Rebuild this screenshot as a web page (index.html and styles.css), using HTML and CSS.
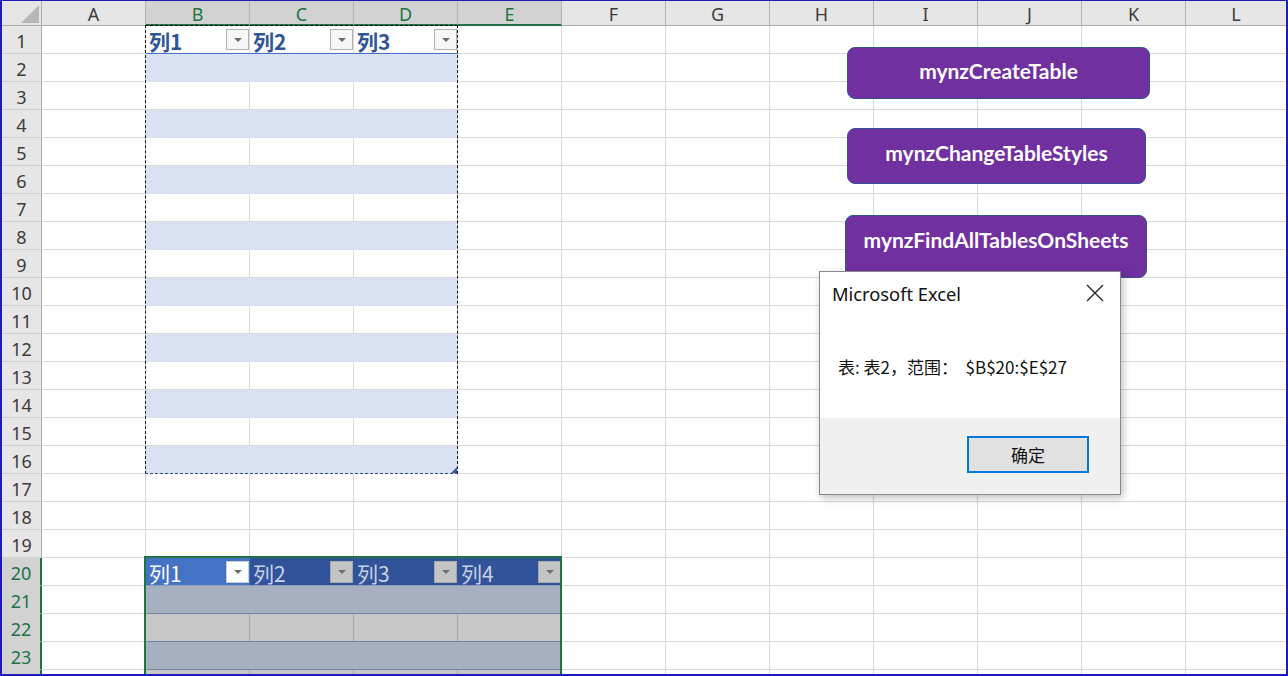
FILE: index.html
```html
<!DOCTYPE html>
<html lang="zh-CN">
<head>
<meta charset="utf-8">
<title>Excel</title>
<link rel="stylesheet" href="styles.css">
</head>
<body>
<div class="sheet">
  <div class="corner"><svg width="40" height="25" viewBox="0 0 40 25"><polygon points="37,4 37,22 19,22" fill="#b7b7b7"/></svg></div>
  <div class="colhdr">A</div>
  <div class="colhdr sel">B</div>
  <div class="colhdr sel">C</div>
  <div class="colhdr sel">D</div>
  <div class="colhdr sel">E</div>
  <div class="colhdr">F</div>
  <div class="colhdr">G</div>
  <div class="colhdr">H</div>
  <div class="colhdr">I</div>
  <div class="colhdr">J</div>
  <div class="colhdr">K</div>
  <div class="colhdr last">L</div>

  <div class="rowhdr r1">1</div>
  <div class="rowhdr">2</div>
  <div class="rowhdr">3</div>
  <div class="rowhdr">4</div>
  <div class="rowhdr">5</div>
  <div class="rowhdr">6</div>
  <div class="rowhdr">7</div>
  <div class="rowhdr">8</div>
  <div class="rowhdr">9</div>
  <div class="rowhdr">10</div>
  <div class="rowhdr">11</div>
  <div class="rowhdr">12</div>
  <div class="rowhdr">13</div>
  <div class="rowhdr">14</div>
  <div class="rowhdr">15</div>
  <div class="rowhdr">16</div>
  <div class="rowhdr">17</div>
  <div class="rowhdr">18</div>
  <div class="rowhdr">19</div>
  <div class="rowhdr sel">20</div>
  <div class="rowhdr sel">21</div>
  <div class="rowhdr sel">22</div>
  <div class="rowhdr sel">23</div>
  <div class="rowhdr sel"></div>

  <div class="cells"></div>

  <div class="table1">
    <div class="t1-head">
      <div class="t1-hcell">列1<span class="dd"></span></div>
      <div class="t1-hcell">列2<span class="dd"></span></div>
      <div class="t1-hcell">列3<span class="dd"></span></div>
    </div>
    <div class="t1-row band"></div>
    <div class="t1-row"></div>
    <div class="t1-row band"></div>
    <div class="t1-row"></div>
    <div class="t1-row band"></div>
    <div class="t1-row"></div>
    <div class="t1-row band"></div>
    <div class="t1-row"></div>
    <div class="t1-row band"></div>
    <div class="t1-row"></div>
    <div class="t1-row band"></div>
    <div class="t1-row"></div>
    <div class="t1-row band"></div>
    <div class="t1-row"></div>
    <div class="t1-row band"></div>
    <div class="ants"></div>
    <div class="handle"></div>
  </div>

  <div class="table2">
    <div class="t2-head">
      <div class="t2-hcell active">列1<span class="dd dd-white"></span></div>
      <div class="t2-hcell">列2<span class="dd dd-gray"></span></div>
      <div class="t2-hcell">列3<span class="dd dd-gray"></span></div>
      <div class="t2-hcell">列4<span class="dd dd-gray"></span></div>
    </div>
    <div class="t2-row dark"><div class="t2-cell"></div><div class="t2-cell"></div><div class="t2-cell"></div><div class="t2-cell"></div></div>
    <div class="t2-row gray"><div class="t2-cell"></div><div class="t2-cell"></div><div class="t2-cell"></div><div class="t2-cell"></div></div>
    <div class="t2-row dark"><div class="t2-cell"></div><div class="t2-cell"></div><div class="t2-cell"></div><div class="t2-cell"></div></div>
    <div class="t2-row gray"><div class="t2-cell"></div><div class="t2-cell"></div><div class="t2-cell"></div><div class="t2-cell"></div></div>
    <div class="selbox"></div>
  </div>

  <div class="macro btn1">mynzCreateTable</div>
  <div class="macro btn2">mynzChangeTableStyles</div>
  <div class="macro btn3">mynzFindAllTablesOnSheets</div>

  <div class="dialog">
    <div class="dlg-title">
      <span>Microsoft Excel</span>
      <svg class="dlg-close" width="18" height="18" viewBox="0 0 18 18"><path d="M1 1 L17 17 M17 1 L1 17" stroke="#222" stroke-width="1.3" fill="none"/></svg>
    </div>
    <div class="dlg-body">表: 表2，范围：&nbsp; $B$20:$E$27</div>
    <div class="dlg-foot">
      <div class="dlg-ok">确定</div>
    </div>
  </div>
</div>
</body>
</html>
```

FILE: styles.css
```css
html, body {
  margin: 0;
  padding: 0;
  background: #ffffff;
}

.sheet {
  position: relative;
  width: 1288px;
  height: 676px;
  box-sizing: border-box;
  border-style: solid;
  border-color: #1c1cb8;
  border-width: 1px 2px 2px 2px;
  overflow: hidden;
  display: grid;
  grid-template-columns: 40px repeat(11, 104px) 100px;
  grid-template-rows: 25px repeat(24, 28px);
  font-family: "Noto Sans", "Liberation Sans", sans-serif;
  background: #ffffff;
}

.corner {
  grid-column: 1;
  grid-row: 1;
  background: #e6e6e6;
  box-sizing: border-box;
  border-right: 1px solid #ababab;
  border-bottom: 1px solid #ababab;
}
.corner svg { display: block; }

.colhdr {
  grid-row: 1;
  background: #e6e6e6;
  box-sizing: border-box;
  border-right: 1px solid #b4b4b4;
  border-bottom: 1px solid #ababab;
  display: flex;
  align-items: center;
  justify-content: center;
  font-size: 18px;
  color: #3c3c3c;
  line-height: 1;
  padding-top: 1px;
}
.colhdr.last { border-right: none; }
.colhdr.sel {
  background: #d2d2d2;
  color: #217346;
  border-bottom: 2px solid #217346;
  padding-top: 2px;
}

.rowhdr {
  grid-column: 1;
  background: #e6e6e6;
  box-sizing: border-box;
  border-right: 1px solid #ababab;
  border-bottom: 1px solid #d0d0d0;
  display: flex;
  align-items: center;
  justify-content: center;
  font-size: 18px;
  color: #3c3c3c;
  line-height: 1;
  padding-top: 2px;
}
.rowhdr.r1 { grid-row: 2; }
.rowhdr.sel {
  background: #d2d2d2;
  color: #217346;
  border-right: 2px solid #217346;
}

.cells {
  grid-column: 2 / -1;
  grid-row: 2 / -1;
  background-image:
    repeating-linear-gradient(to right, transparent 0 103px, #d9d9d9 103px 104px),
    repeating-linear-gradient(to bottom, transparent 0 27px, #d9d9d9 27px 28px);
}

/* Table 1 */
.table1 {
  grid-column: 3 / 6;
  grid-row: 2 / 18;
  position: relative;
  display: flex;
  flex-direction: column;
}
.t1-head {
  display: flex;
  height: 28px;
}
.t1-hcell {
  position: relative;
  width: 104px;
  height: 28px;
  box-sizing: border-box;
  border-bottom: 1px solid #4472c4;
  font-family: "Noto Sans CJK SC", "Noto Sans", sans-serif;
  font-size: 21px;
  font-weight: 700;
  color: #2f5597;
  padding-left: 3px;
  line-height: 31px;
}
.t1-row {
  height: 28px;
  flex: none;
}
.t1-row.band { background: #d9e1f2; }

.dd {
  position: absolute;
  right: 1px;
  bottom: 3px;
  width: 23px;
  height: 21px;
  box-sizing: border-box;
  border: 1px solid #b1b1b1;
  background: #f7f7f7;
}
.dd::after {
  content: "";
  position: absolute;
  left: 7px;
  top: 8px;
  border-left: 4px solid transparent;
  border-right: 4px solid transparent;
  border-top: 4px solid #6d6d6d;
}
.dd-white { background: #ffffff; border-color: #d0d0d0; }
.dd-gray { background: #c4c4c4; border-color: #a8a8a8; }

.ants {
  position: absolute;
  top: -1px;
  left: -1px;
  right: 0;
  bottom: 0;
  border: 1px dashed #111111;
  border-bottom-color: #2f4f8f;
  pointer-events: none;
}
.handle {
  position: absolute;
  right: 1px;
  bottom: 1px;
  width: 0;
  height: 0;
  border-left: 6px solid transparent;
  border-bottom: 6px solid #3b56a0;
}

/* Table 2 */
.table2 {
  grid-column: 3 / 7;
  grid-row: 21 / 26;
  position: relative;
  display: flex;
  flex-direction: column;
}
.t2-head {
  display: flex;
  height: 28px;
  background: #30539a;
  box-sizing: border-box;
  border-bottom: 1px solid #8d9bb6;
}
.t2-hcell {
  position: relative;
  width: 104px;
  height: 27px;
  font-family: "Noto Sans CJK SC", "Noto Sans", sans-serif;
  font-size: 21px;
  color: #c9d2e6;
  padding-left: 3px;
  box-sizing: border-box;
  line-height: 31px;
}
.t2-hcell.active {
  background: #4472c4;
  color: #ffffff;
}
.t2-hcell .dd { bottom: 2px; height: 22px; }
.t2-row {
  display: flex;
  height: 28px;
  box-sizing: border-box;
  border-bottom: 1px solid #7584a4;
  flex: none;
}
.t2-row.dark { background: #a7b0c1; }
.t2-row.gray { background: #c7c7c7; }
.t2-cell {
  width: 104px;
  box-sizing: border-box;
}
.t2-row.gray .t2-cell { border-right: 1px solid #a5a5a5; }

.selbox {
  position: absolute;
  top: -2px;
  left: -2px;
  right: 0;
  bottom: -10px;
  border: 2px solid #217346;
  pointer-events: none;
}

/* Macro buttons */
.macro {
  position: absolute;
  box-sizing: border-box;
  background: #7030a0;
  border: 1.5px solid #2f5597;
  border-radius: 8px;
  color: #ffffff;
  font-family: "Lato", "Open Sans", sans-serif;
  font-weight: 700;
  font-size: 21px;
  display: flex;
  align-items: center;
  justify-content: center;
}
.btn1 { left: 845px; top: 46px; width: 303px; height: 52px; padding-bottom: 5px; }
.btn2 { left: 845px; top: 127px; width: 299px; height: 56px; padding-bottom: 7px; }
.btn3 { left: 843px; top: 214px; width: 302px; height: 63px; padding-bottom: 14px; }

/* Dialog */
.dialog {
  position: absolute;
  left: 817px;
  top: 270px;
  width: 302px;
  height: 224px;
  box-sizing: border-box;
  border: 1px solid #8a8a8a;
  background: #ffffff;
  box-shadow: 2px 3px 8px rgba(0, 0, 0, 0.25);
  display: flex;
  flex-direction: column;
}
.dlg-title {
  height: 42px;
  flex: none;
  display: flex;
  align-items: center;
  justify-content: space-between;
  padding: 0 16px 0 12px;
  font-family: "Noto Sans", "Open Sans", sans-serif;
  font-size: 18.3px;
  color: #111111;
}
.dlg-close { display: block; }
.dlg-body {
  height: 104px;
  flex: none;
  display: flex;
  align-items: center;
  padding-left: 18px;
  font-family: "Noto Sans CJK SC", "Noto Sans", sans-serif;
  font-size: 17px;
  color: #111111;
}
.dlg-foot {
  flex: 1;
  background: #f0f0f0;
  display: flex;
  justify-content: flex-end;
  align-items: flex-start;
  padding: 18px 31px 0 0;
}
.dlg-ok {
  width: 122px;
  height: 37px;
  box-sizing: border-box;
  border: 2px solid #0078d7;
  background: #e1e1e1;
  display: flex;
  align-items: center;
  justify-content: center;
  font-family: "Noto Sans CJK SC", sans-serif;
  font-size: 17px;
  color: #111111;
}
```
